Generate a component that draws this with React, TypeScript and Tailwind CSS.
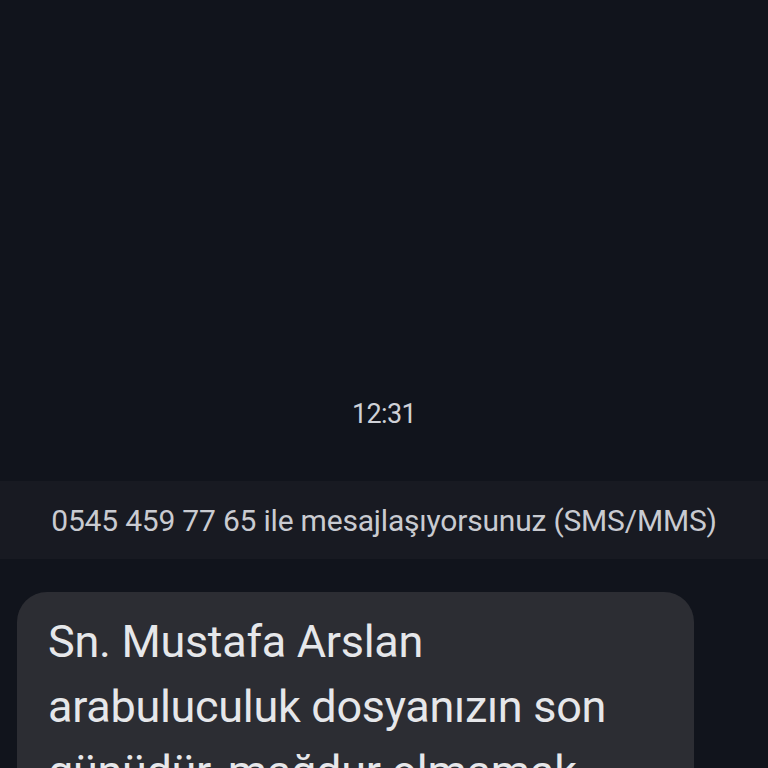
export default function App() {
  return (
    <div className="w-[768px] h-[768px] overflow-hidden bg-[#11141c] font-['Roboto',sans-serif] flex flex-col">
      {/* empty thread area */}
      <div className="h-[394px] shrink-0" />

      {/* timestamp */}
      <div className="h-[40px] shrink-0 flex items-center justify-center text-[27px] text-[#cfd1d7] tracking-[-0.6px]">
        12:31
      </div>

      <div className="h-[47px] shrink-0" />

      {/* conversation info band */}
      <div className="h-[78px] shrink-0 bg-[#181a22] flex items-center justify-center text-[30px] text-[#c9cbd1] tracking-[-0.2px]">
        0545 459 77 65 ile mesajlaşıyorsunuz (SMS/MMS)
      </div>

      <div className="h-[33px] shrink-0" />

      {/* incoming message bubble */}
      <div className="pl-[17px] shrink-0">
        <div className="w-[677px] bg-[#2c2d33] rounded-[30px] pl-[31px] pr-[80px] pt-[17px] pb-[24px] text-[45px] leading-[65px] text-[#e6e7ea] tracking-[-0.3px]">
          Sn. Mustafa Arslan arabuluculuk dosyanızın son günüdür, mağdur olmamak için lütfen dönüş sağlayınız.
        </div>
      </div>
    </div>
  );
}
